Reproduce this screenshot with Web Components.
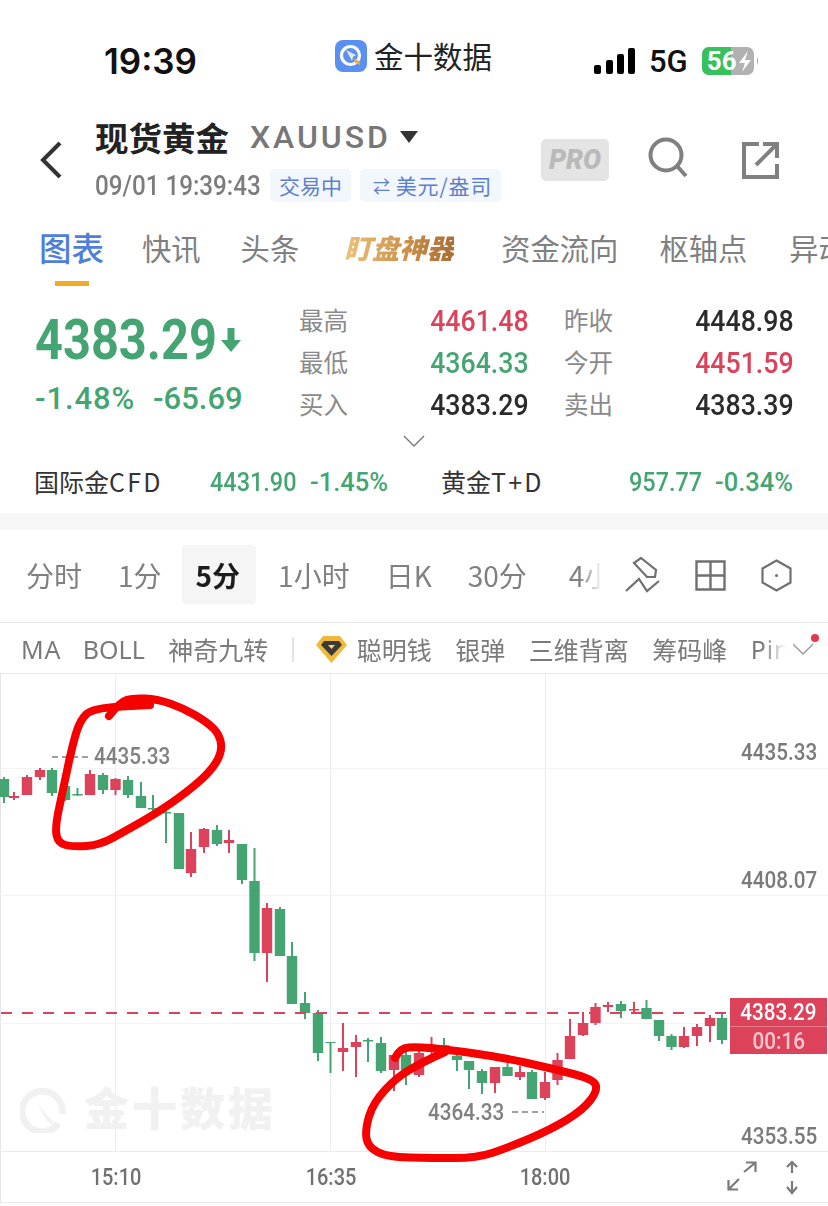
<!DOCTYPE html>
<html lang="zh">
<head>
<meta charset="utf-8">
<title>现货黄金</title>
<style>
  html, body { margin: 0; padding: 0; background: #fff; }
  body {
    width: 828px; height: 1206px; overflow: hidden;
    font-family: "Noto Sans CJK SC", "Noto Sans", sans-serif;
    --din: "Roboto", "Noto Sans CJK SC", sans-serif;
    --cjk: "Noto Sans CJK SC", "Noto Sans", sans-serif;
    --green: #45a572;
    --red: #dc4259;
    --gray: #808080;
  }
  quote-gap { display: block; height: 17px; background: #f7f7f7; }
</style>
</head>
<body>
<status-bar></status-bar>
<quote-header></quote-header>
<nav-tabs></nav-tabs>
<quote-panel></quote-panel>
<quote-gap></quote-gap>
<period-bar></period-bar>
<indicator-bar></indicator-bar>
<kline-chart></kline-chart>

<script>
// helper for the small template boilerplate
function shadow(el, html) {
  const t = document.createElement('template');
  t.innerHTML = html;
  el.attachShadow({ mode: 'open' }).appendChild(t.content.cloneNode(true));
}

const LOGO = `<svg viewBox="0 0 32 32" width="32" height="32">
  <rect width="32" height="32" rx="8" fill="#5b8ff0"/>
  <circle cx="15.5" cy="15.5" r="9" fill="none" stroke="#fff" stroke-width="3.2"/>
  <path d="M11 10l10 5-3 2-1 4z" fill="#dfe9fb"/>
  <path d="M19 18l5 3 1 4-5-2z" fill="#eeb043"/>
</svg>`;

class StatusBar extends HTMLElement {
  connectedCallback() {
    shadow(this, `<style>
      :host { display: flex; align-items: center; height: 115px; box-sizing: border-box; padding: 4px 0 0 104px; color: #111; }
      .time { font: 600 35px/1 Inter, sans-serif; width: 231px; margin-top: 3px; }
      .app { display: flex; align-items: center; gap: 7px; width: 259px; font: 400 29.5px/1 var(--cjk); color: #222; margin-top: -8px; }
      .sig { display: block; }
      .net { font: 500 31px/1 Roboto, sans-serif; margin: 0 14px 0 14px; }
      .right { display: flex; align-items: center; margin-top: 3px; }
      .wrap { position: relative; width: 58px; height: 28px; }
      .wrap b { position: absolute; left: 5px; top: 0; font: 700 26px/28px Roboto, sans-serif; color: #fff; }
    </style>
    <div class="time">19:39</div>
    <div class="app">${LOGO}<span>金十数据</span></div>
    <div class="right">
      <svg class="sig" width="41" height="26" viewBox="0 0 41 26" fill="#000">
        <rect x="0" y="17" width="7" height="9" rx="2"/><rect x="12" y="12" width="7" height="14" rx="2"/>
        <rect x="23" y="6" width="7" height="20" rx="2"/><rect x="34" y="0" width="7" height="26" rx="2"/>
      </svg>
      <div class="net">5G</div>
      <div class="wrap">
        <svg width="58" height="28" viewBox="0 0 58 28" style="position:absolute;left:0;top:0">
          <rect x="0" y="0" width="52" height="28" rx="7" fill="#b1b1b1"/>
          <path d="M7 0h22v28H7a7 7 0 0 1-7-7V7a7 7 0 0 1 7-7z" fill="#38c05c"/>
          <path d="M55 10q2.500 4 0 8z" fill="#b1b1b1"/>
          <path d="M46 4l-9 12h6l-3 9 9-12h-6z" fill="#fff"/>
        </svg>
        <b>56</b>
      </div>
    </div>`);
  }
}
customElements.define('status-bar', StatusBar);

class TagChip extends HTMLElement {
  connectedCallback() {
    shadow(this, `<style>
      :host { display: flex; align-items: center; height: 33px; padding: 0 9px; background: #f2f6fd; border-radius: 5px; color: #5c80cb; font: 400 21px/1 var(--cjk); white-space: nowrap; }
    </style><slot></slot>`);
  }
}
customElements.define('tag-chip', TagChip);

class ProBadge extends HTMLElement {
  connectedCallback() {
    shadow(this, `<style>
      :host { display: flex; align-items: center; justify-content: center; width: 68px; height: 42px; background: #e4e4e4; border-radius: 5px; color: #b9b9b9; font: italic 900 27px/1 Roboto, sans-serif; }
    </style>PRO`);
  }
}
customElements.define('pro-badge', ProBadge);

class QuoteHeader extends HTMLElement {
  connectedCallback() {
    shadow(this, `<style>
      :host { display: flex; height: 95px; position: relative; }
      .back { margin: 26px 32px 0 39px; flex: none; }
      .main { width: 446px; flex: none; }
      .l1 { display: flex; align-items: center; height: 50px; margin-top: -3px; }
      h1 { margin: 0; font: 700 33.5px/1 var(--cjk); color: #222; }
      .code { margin-left: 21px; font: 500 32px/1 Roboto, sans-serif; color: #777; letter-spacing: 2.900px; }
      .l2 { display: flex; align-items: center; margin-top: 7px; }
      .date { font: 500 27.500px/33px var(--din); color: #7c7c7c; width: 175px; flex: none; white-space: nowrap; transform: scaleX(.88); transform-origin: left center; }
      .tools { display: flex; align-items: center; padding-top: 23px; height: 44px; flex: none; }
      .chips { display: flex; gap: 9px; }
      svg { display: block; }
    </style>
    <svg class="back" width="24" height="38" viewBox="0 0 24 38"><path d="M21 2L4 19l17 17" fill="none" stroke="#333" stroke-width="4"/></svg>
    <div class="main">
      <div class="l1"><h1>现货黄金</h1><span class="code">XAUUSD</span>
        <svg width="18" height="12" viewBox="0 0 18 12" style="margin-left:9px"><path d="M0 0h18L9 12z" fill="#333"/></svg></div>
      <div class="l2"><span class="date">09/01 19:39:43</span>
        <div class="chips"><tag-chip>交易中</tag-chip><tag-chip style="padding:0 9px 0 13px;letter-spacing:.8px"><small style="font-size:17px;margin-right:5px">⇄</small>美元/盎司</tag-chip></div></div>
    </div>
    <div class="tools">
      <pro-badge></pro-badge>
      <svg width="42" height="42" viewBox="0 0 42 42" style="margin:-4px 0 0 39px"><circle cx="18" cy="18" r="15.500" fill="none" stroke="#808080" stroke-width="4"/><path d="M29 29l9 10" stroke="#808080" stroke-width="4" fill="none"/></svg>
      <svg width="37" height="37" viewBox="0 0 37 37" style="margin-left:52px"><path d="M17 2H2v33h33V22" fill="none" stroke="#808080" stroke-width="4"/><path d="M14 23L33 4M21 2h14v14" fill="none" stroke="#808080" stroke-width="4"/></svg>
    </div>`);
  }
}
customElements.define('quote-header', QuoteHeader);

class NavTabs extends HTMLElement {
  connectedCallback() {
    shadow(this, `<style>
      :host { display: block; height: 76px; overflow: hidden; position: relative; }
      .row { display: flex; align-items: center; height: 75px; padding-left: 39px; white-space: nowrap; color: #808080; font: 400 29.300px/1 var(--cjk); }
      .on { color: #4f7fd8; font-size: 32.500px; font-weight: 500; position: relative; margin-right: 38px; }
      .on::after { content: ""; position: absolute; left: 16px; width: 34px; height: 5px; bottom: -22px; background: #f0ac28; }
      .t { margin-right: 40px; }
      .gold { font: italic 900 27.500px/1 var(--cjk); margin: 0 47px 0 5px;
        background: linear-gradient(90deg, #edc47c, #c98d49 60%, #a96f34); -webkit-background-clip: text; background-clip: text; color: transparent; }
    </style>
    <div class="row">
      <span class="on">图表</span><span class="t">快讯</span><span class="t">头条</span><span class="gold">盯盘神器</span>
      <span class="t" style="margin-right:41px">资金流向</span><span class="t" style="margin-right:42px">枢轴点</span><span class="t">异动</span>
    </div>`);
  }
}
customElements.define('nav-tabs', NavTabs);

class StatCell extends HTMLElement {
  connectedCallback() {
    const tone = this.getAttribute('tone') || 'ink';
    const color = { ink: '#2b2b2b', up: 'var(--red)', down: 'var(--green)' }[tone];
    shadow(this, `<style>
      :host { display: flex; align-items: center; justify-content: space-between; height: 42px; }
      .k { font: 400 24.500px/1 var(--cjk); color: #8a8a8a; }
      .v { display: inline-block; margin-top: 2px; font: 500 30px/1 var(--din); color: ${color}; transform: scaleX(.89); transform-origin: right center; }
    </style><span class="k">${this.getAttribute('label')}</span><span class="v"><slot></slot></span>`);
  }
}
customElements.define('stat-cell', StatCell);

class QuotePanel extends HTMLElement {
  connectedCallback() {
    shadow(this, `<style>
      :host { display: block; height: 227px; position: relative; }
      .top { display: flex; height: 126px; padding-top: 13px; }
      .big { width: 264px; flex: none; padding-left: 35px; box-sizing: border-box; color: var(--green); }
      .price { display: flex; align-items: center; height: 56px; margin-top: 13px; font: 700 56px/1 var(--din); }
      .price span { display: block; width: 186px; flex: none; white-space: nowrap; transform: scaleX(.87); transform-origin: left center; }
      .chg { display: flex; margin-top: 15px; font: 500 31px/1 var(--din); white-space: nowrap; }
      .grid { display: grid; grid-template-columns: 230px 230px; column-gap: 35px; margin-left: 35px; flex: none; }
      .more { display: flex; justify-content: center; height: 20px; margin-top: 10px; }
      .cfd { display: flex; align-items: center; height: 44px; margin-top: 4px; padding-left: 34px; font: 400 25px/1 var(--cjk); color: #333; white-space: nowrap; }
      .cfd i { font-style: normal; letter-spacing: 2.200px; }
      .cfd b { display: block; margin-top: 4px; font: 500 25.500px/1 var(--din); color: var(--green); transform: scaleX(.92); transform-origin: left center; }
      .cfd b.pct { transform: none; }
      .cfd span, .cfd b { flex: none; }
    </style>
    <div class="top">
      <div class="big">
        <div class="price"><span>4383.29</span><svg width="20" height="24" viewBox="0 0 20 24" style="flex:none"><path d="M6.500 0h7v12H20L10 24 0 12h6.500z" fill="#45a572"/></svg></div>
        <div class="chg"><span style="width:118px;letter-spacing:.9px">-1.48%</span><span>-65.69</span></div>
      </div>
      <div class="grid">
        <stat-cell label="最高" tone="up">4461.48</stat-cell><stat-cell label="昨收">4448.98</stat-cell>
        <stat-cell label="最低" tone="down">4364.33</stat-cell><stat-cell label="今开" tone="up">4451.59</stat-cell>
        <stat-cell label="买入">4383.29</stat-cell><stat-cell label="卖出">4383.39</stat-cell>
      </div>
    </div>
    <div class="more"><svg width="22" height="13" viewBox="0 0 22 13"><path d="M1 1l10 10L21 1" fill="none" stroke="#777" stroke-width="1.300"/></svg></div>
    <div class="cfd">
      <span style="width:176px">国际金<i>CFD</i></span><b style="width:100px">4431.90</b><b class="pct" style="width:131px">-1.45%</b>
      <span style="width:188px">黄金<i>T+D</i></span><b style="width:86px">957.77</b><b class="pct">-0.34%</b>
    </div>`);
  }
}
customElements.define('quote-panel', QuotePanel);

class PeriodBar extends HTMLElement {
  connectedCallback() {
    shadow(this, `<style>
      :host { display: flex; align-items: center; height: 92px; border-bottom: 1px solid #e6e6e6; position: relative; color: #808080; }
      .list { display: flex; align-items: center; width: 603px; flex: none; overflow: hidden; padding-left: 26px; margin-bottom: 3px; box-sizing: border-box; white-space: nowrap; font: 400 28px/1 var(--cjk); -webkit-mask-image: linear-gradient(90deg, #000 96%, transparent); mask-image: linear-gradient(90deg, #000 96%, transparent); }
      .list span { margin-right: 36px; }
      .list .cur { display: flex; align-items: center; height: 59px; padding: 0 16px 0 14px; margin: 0 22px 0 -16px; background: #f5f5f5; border-radius: 4px; color: #1d1d1d; font-weight: 700; }
      .tools { display: flex; align-items: center; gap: 35px; padding-left: 22px; margin-bottom: 2px; }
      svg { display: block; fill: none; stroke: #707070; }
    </style>
    <div class="list"><span>分时</span><span>1分</span><span class="cur">5分</span><span>1小时</span><span>日K</span><span style="margin-right:42px">30分</span><span>4小时</span></div>
    <div class="tools">
      <svg width="35" height="36" viewBox="0 0 35 36" stroke-width="2.200"><path d="M9 6l7-5 15 12-1 7h-8zM1 34l13-12 8 12 12-10"/></svg>
      <svg width="31" height="31" viewBox="0 0 31 31" stroke-width="2.400"><path d="M1.500 1.500h28v28h-28zM15.500 1.500v28M1.500 15.500h28"/></svg>
      <svg width="31" height="33" viewBox="0 0 31 33" stroke-width="2.200"><path d="M15.500 1.500l14 8v14l-14 8-14-8v-14z"/><circle cx="15.500" cy="16.500" r="1.500" fill="#707070" stroke="none"/></svg>
    </div>`);
  }
}
customElements.define('period-bar', PeriodBar);

class IndicatorBar extends HTMLElement {
  connectedCallback() {
    shadow(this, `<style>
      :host { display: block; height: 50px; position: relative; color: #7a7a7a; overflow: hidden; }
      .row { display: flex; align-items: center; height: 52px; width: 786px; overflow: hidden; box-sizing: border-box; padding-left: 21px; white-space: nowrap; font: 400 25px/1 var(--cjk); -webkit-mask-image: linear-gradient(90deg, #000 97%, transparent); mask-image: linear-gradient(90deg, #000 97%, transparent); }
      .row span { margin-right: 23.500px; }
      .lat { font-family: "Noto Sans", sans-serif; }
      .div { width: 2px; height: 25px; background: #e2e2e2; margin-right: 22px; flex: none; }
      .arrow { position: absolute; right: 15px; top: 20px; }
      .dot { position: absolute; left: 811px; top: 11px; width: 8px; height: 8px; border-radius: 50%; background: #e0394f; }
    </style>
    <div class="row">
      <span class="lat" style="letter-spacing:.8px;margin-right:21.500px">MA</span><span class="lat">BOLL</span><span>神奇九转</span><i class="div"></i>
      <svg width="31" height="27" viewBox="0 0 31 27" style="margin-right:10px;flex:none"><path d="M7 0h17l7 9-15.500 18L0 9z" fill="#f0b93a"/><path d="M5 9l3-4h15l3 4-10.500 11z" fill="#3d3a35"/><path d="M12 9h7l-3.500 4z" fill="#f6d27a"/></svg>
      <span>聪明钱</span><span>银弹</span><span>三维背离</span><span>筹码峰</span><span class="lat" style="letter-spacing:.8px">Pin</span>
    </div>
    <svg class="arrow" width="20" height="12" viewBox="0 0 20 12"><path d="M0 1l10 10L20 1" fill="none" stroke="#999" stroke-width="1.300"/></svg>
    <i class="dot"></i>`);
  }
}
customElements.define('indicator-bar', IndicatorBar);

// x center, body top, body bottom, wick top, wick bottom, colour (page coords)
const CANDLES = [
  [4,779,797,777,803,'g'],[14,796,798,792,800,'r'],[27,777,795,775,795,'r'],[40,770,777,768,780,'r'],
  [52,770,793,768,796,'g'],[65,786,800,784,801,'g'],[77.500,794,795.500,788,796,'g'],[90,774,795,770,795,'r'],
  [103,775,790,773,794,'g'],[115.500,779,790,778,795,'r'],[128,780,795,776,798,'g'],[141,796,808,782,808,'g'],
  [153,808,809.500,795,816,'g'],[166,812,813.500,802,843,'g'],[179,813,869,813,869,'g'],[191,849,873,832,877,'r'],
  [204,829,847,828,853,'r'],[217,830,844,825,846,'g'],[229,840,843,830,853,'r'],[242,844,880,844,884,'g'],
  [254.500,881,953,848,961,'g'],[267,908,953,903,982,'r'],[280,909,956,907,956,'g'],[292,956,1004,942,1004,'g'],
  [305,1003,1013,992,1019,'g'],[318,1013,1053,1010,1061,'g'],[330.500,1042,1043,1042,1073,'g'],[343,1048,1052,1023,1071,'r'],
  [356,1042,1047,1035,1077,'r'],[368,1040,1041.500,1038,1062,'g'],[381,1043,1071,1037,1073,'g'],[394,1055,1070,1053,1091,'r'],
  [406,1055,1070,1050,1085,'g'],[419,1053,1075,1050,1077,'r'],[431.500,1047,1052,1037,1056,'r'],[444,1045,1052,1038,1056,'g'],
  [457,1056,1060,1050,1071,'g'],[469,1061,1070,1061,1089,'g'],[482,1071,1083,1069,1094,'g'],[495,1067,1083,1067,1093,'r'],
  [507.500,1067,1076,1063,1076,'g'],[520,1072,1077,1066,1080,'r'],[532,1072,1099,1070,1099,'g'],[545,1082,1098,1072,1100,'r'],
  [557.500,1060,1080,1053,1085,'r'],[570,1036,1059,1019,1059,'r'],[583,1023,1035,1012,1036,'r'],[595.500,1007,1023,1003,1025,'r'],
  [608,1005,1007,1002,1012,'r'],[621,1004,1011,1001,1018,'g'],[634,1009,1010.500,1002,1012,'r'],[646.500,1008,1019,1000,1019,'g'],
  [659,1020,1036,1020,1041,'g'],[671.500,1036,1047,1034,1050,'g'],[684,1036,1047,1027,1048,'r'],[697,1027,1036,1024,1046,'r'],
  [710,1018,1026,1015,1042,'r'],[722,1018,1040,1013,1044,'g']
];

const RING_A = [[109,716],[120,702],[133,698],[157,699],[183,708],[207,722],[220,735],[222,753],[210,772],[187,792],[157,813],[127,830],[100,845],[73,847],[58,843],[55,827],[63,790],[72,747],[80,720],[93,708],[150,705]];
const RING_B = [[395,1058],[400,1048],[417,1047],[443,1049],[500,1057],[550,1068],[593,1079],[598,1090],[583,1110],[550,1130],[507,1148],[477,1158],[433,1158],[387,1157],[368,1147],[365,1130],[373,1103],[397,1077],[423,1062],[445,1052]];

function smooth(pts) {
  let d = `M${pts[0][0]} ${pts[0][1] - 674}`;
  for (let i = 1; i < pts.length - 1; i++) {
    const mx = (pts[i][0] + pts[i + 1][0]) / 2, my = (pts[i][1] + pts[i + 1][1]) / 2 - 674;
    d += `Q${pts[i][0]} ${pts[i][1] - 674} ${mx} ${my}`;
  }
  const e = pts[pts.length - 1];
  return d + `L${e[0]} ${e[1] - 674}`;
}

class KlineChart extends HTMLElement {
  connectedCallback() {
    const candles = CANDLES.map(([x, t, b, wt, wb, c]) => {
      const col = c === 'g' ? '#45a572' : '#dc4259';
      return `<path d="M${x} ${wt - 674}V${wb - 674}" stroke="${col}" stroke-width="2"/><rect x="${x - 5.2}" y="${t - 674}" width="10.400" height="${b - t}" fill="${col}"/>`;
    }).join('');
    shadow(this, `<style>
      :host { display: block; position: relative; height: 532px; border-top: 1px solid #e8e8e8; overflow: hidden; }
      svg.plot { position: absolute; left: 0; top: 0; }
      .lab, .mark { position: absolute; font: 500 23.500px/1 var(--din); color: #7a7a7a; white-space: nowrap; transform: scaleX(.88); transform-origin: left center; }
      .mark { color: #808080; }
      .axis { position: absolute; top: 492px; width: 80px; text-align: center; font: 500 23.500px/1 var(--din); color: #707070; transform: scaleX(.85); }
      .tag { position: absolute; left: 730px; top: 324px; width: 97px; height: 56px; background: #dc4259; color: #fff; text-align: center; }
      .tag div { height: 28px; font: 500 23.500px/28px var(--din); }
      .tag div span { display: inline-block; transform: scaleX(.88); }
      .tag div + div { border-top: 1px solid #e77a8a; height: 27px; color: #f5c7ce; }
      .wm { position: absolute; left: 20px; top: 411px; display: flex; align-items: center; gap: 16px; color: #f1f1f1; font: 900 45px/1 var(--cjk); letter-spacing: 3px; }
      .wm span { margin-top: -6px; }
      .fs { position: absolute; left: 726px; top: 484px; }
    </style>
    <svg class="plot" width="828" height="530" viewBox="0 0 828 530">
      <path d="M0.500 0V530" stroke="#e6e6e6"/>
      <path d="M115.500 0V477M330.500 0V477M545.500 0V477" stroke="#ececec"/>
      <path d="M0 94.500H828M0 221.500H828M0 349.500H828" stroke="#f3f3f3"/>
      <path d="M0 477.500H828M0 528.500H828" stroke="#ececec"/>
      <path d="M52 83h40" stroke="#808080" stroke-width="1.500" stroke-dasharray="6 4"/>
      <path d="M512 438h32" stroke="#808080" stroke-width="1.500" stroke-dasharray="6 4"/>
      ${candles}
      <path d="M1 339H730" stroke="#dc4259" stroke-width="2" stroke-dasharray="11 10"/>
      <path d="${smooth(RING_A)}" fill="none" stroke="#f60000" stroke-width="8" stroke-linecap="round" stroke-linejoin="round"/>
      <path d="${smooth(RING_B)}" fill="none" stroke="#f60000" stroke-width="8" stroke-linecap="round" stroke-linejoin="round"/>
    </svg>
    <div class="wm">
      <svg width="48" height="48" viewBox="0 0 50 50"><path d="M40 40A21 21 0 1 1 44 30" fill="none" stroke="#f1f1f1" stroke-width="7"/><path d="M18 19l22 27-12-9z" fill="#f1f1f1"/></svg>
      <span>金十数据</span>
    </div>
    <span class="mark" style="left:94px;top:71px">4435.33</span>
    <span class="mark" style="left:428px;top:427px">4364.33</span>
    <span class="lab" style="left:741px;top:67px">4435.33</span>
    <span class="lab" style="left:741px;top:195px">4408.07</span>
    <span class="lab" style="left:741px;top:451px">4353.55</span>
    <div class="tag"><div><span>4383.29</span></div><div><span>00:16</span></div></div>
    <span class="axis" style="left:76px">15:10</span>
    <span class="axis" style="left:291px">16:35</span>
    <span class="axis" style="left:505px">18:00</span>
    <svg class="fs" width="90" height="40" viewBox="0 0 90 40" fill="none" stroke="#7a7a7a" stroke-width="2.200">
      <path d="M3 31L13 21M2.500 22V31.500H12M18 14L29 5M20 4.500H29.500V14"/>
      <path d="M66 4V15M61 9L66 4L71 9M66 23V35M61 29L66 35L71 29"/>
    </svg>`);
  }
}
customElements.define('kline-chart', KlineChart);
</script>
</body>
</html>
